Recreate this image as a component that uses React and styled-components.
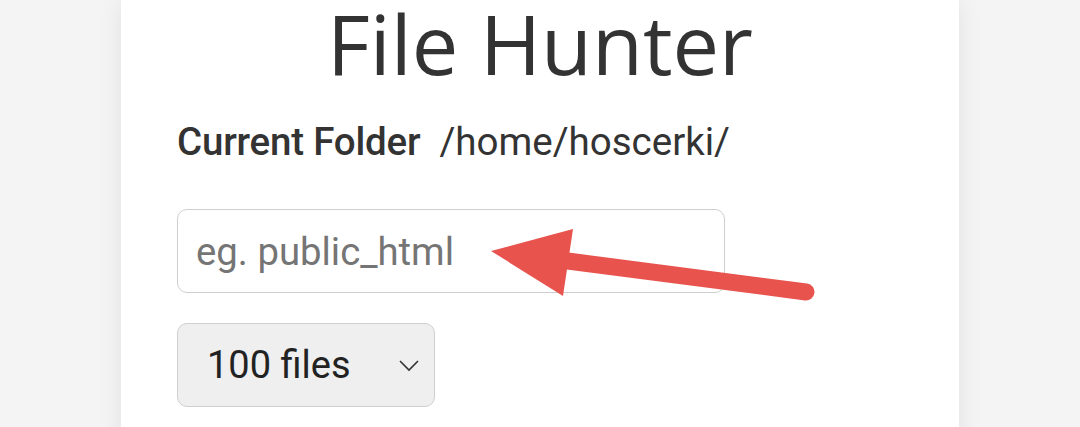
import styled, { createGlobalStyle } from "styled-components";

const Global = createGlobalStyle`
  html, body {
    margin: 0;
    padding: 0;
    background: #f4f4f4;
    overflow: hidden;
  }
  * { box-sizing: border-box; }
`

const Page = styled.div`
  display: flex;
  justify-content: center;
  height: 427px;
  overflow: hidden;
`

const Card = styled.div`
  position: relative;
  width: 838px;
  min-height: 460px;
  padding: 0 56px;
  background: #fff;
  box-shadow: 0 0 22px rgba(0, 0, 0, 0.08);
  color: #333;
`

const Title = styled.h1`
  margin: 0;
  text-align: center;
  font-family: "Open Sans", sans-serif;
  font-weight: 400;
  font-size: 83px;
  line-height: 86px;
`

const FolderRow = styled.div`
  display: flex;
  align-items: baseline;
  gap: 19px;
  margin-top: 34px;
  font-family: Roboto, sans-serif;
  font-size: 38.5px;
  line-height: 44px;
  .label { font-weight: 500; letter-spacing: -0.2px; }
  .path { font-weight: 400; }
`

const Field = styled.input`
  display: block;
  width: 548px;
  height: 84px;
  margin-top: 45px;
  padding: 0 18px;
  border: 1.5px solid #cfcfcf;
  border-radius: 10px;
  font-family: Roboto, sans-serif;
  font-size: 38.3px;
  color: #333;
  outline: none;
  &::placeholder { color: #757575; }
`

const SelectWrap = styled.div`
  position: relative;
  width: 258px;
  margin-top: 30px;
  svg {
    position: absolute;
    right: 15px;
    top: 35px;
    pointer-events: none;
  }
`

const Select = styled.select`
  appearance: none;
  width: 100%;
  height: 84px;
  padding: 0 0 0 29px;
  background: #efefef;
  border: 1.5px solid #cfcfcf;
  border-radius: 10px;
  font-family: Roboto, sans-serif;
  font-size: 38px;
  color: #222;
`

const Arrow = styled.svg`
  position: absolute;
  left: 359px;
  top: 220px;
  overflow: visible;
`

export default function App(){
  return(
    <Page>
      <Global/>
      <Card>
        <Title>File Hunter</Title>
        <FolderRow>
          <span className="label">Current Folder</span>
          <span className="path">/home/hoscerki/</span>
        </FolderRow>
        <Field placeholder="eg. public_html"/>
        <SelectWrap>
          <Select defaultValue="100">
            <option value="100">100 files</option>
            <option value="500">500 files</option>
          </Select>
          <svg width="22" height="14" viewBox="0 0 22 14">
            <path d="M2 3 L11 12 L20 3" fill="none" stroke="#333" strokeWidth="1.6"/>
          </svg>
        </SelectWrap>
        <Arrow width="350" height="90" viewBox="0 0 350 90">
          <path d="M326 72 L80 40" stroke="#e8534e" strokeWidth="17" strokeLinecap="round"/>
          <path d="M11 31 L93 9 L83 76 Z" fill="#e8534e"/>
        </Arrow>
      </Card>
    </Page>
  )
}
